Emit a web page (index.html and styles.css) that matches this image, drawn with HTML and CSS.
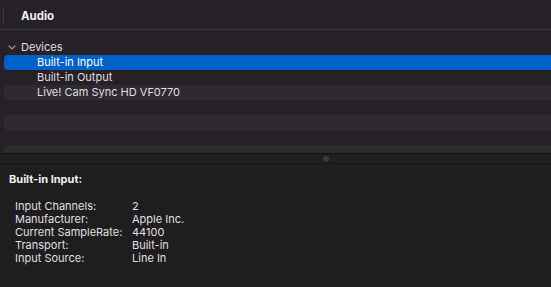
FILE: index.html
```html
<!DOCTYPE html>
<html lang="en">
<head>
    <meta charset="UTF-8">
    <meta name="viewport" content="width=device-width, initial-scale=1.0">
    <title>Audio</title>
    <link rel="stylesheet" href="styles.css">
</head>
<body>
    <div class="window">
        <div class="header">
            <div class="sep"></div>
            <div class="title">Audio</div>
        </div>
        <div class="tree">
            <div class="row group">
                <svg class="chevron" width="8" height="5" viewBox="0 0 8 5">
                    <polyline points="0.7,0.7 4,4 7.3,0.7" fill="none" stroke="#a9a5aa" stroke-width="1.1"/>
                </svg>
                <span>Devices</span>
            </div>
            <div class="row item selected"><span>Built-in Input</span></div>
            <div class="row item"><span>Built-in Output</span></div>
            <div class="row item alt"><span>Live! Cam Sync HD VF0770</span></div>
            <div class="row"></div>
            <div class="row alt"></div>
            <div class="row"></div>
            <div class="row alt"></div>
        </div>
        <div class="splitter"><div class="dot"></div></div>
        <div class="details">
            <div class="details-title">Built-in Input:</div>
            <div class="props">
                <div>Input Channels:</div><div>2</div>
                <div>Manufacturer:</div><div>Apple Inc.</div>
                <div>Current SampleRate:</div><div>44100</div>
                <div>Transport:</div><div>Built-in</div>
                <div>Input Source:</div><div>Line In</div>
            </div>
        </div>
    </div>
</body>
</html>
```
FILE: styles.css
```css
body {
    margin: 0;
    background-color: #1e1e1e;
    color: #e2dfe3;
    font-family: Inter, "Noto Sans", sans-serif;
    font-size: 11px;
}
.window {
    width: 551px;
    height: 287px;
    display: flex;
    flex-direction: column;
    overflow: hidden;
}
.header {
    height: 29px;
    background-color: #252126;
    border-bottom: 1px solid #3a363a;
    display: flex;
    align-items: center;
}
.sep {
    width: 1px;
    height: 16px;
    margin-left: 3px;
    background-color: #3e3a3e;
}
.title {
    margin-left: 17px;
    margin-top: 2px;
    font-weight: 700;
    font-size: 11.5px;
    color: #f2f0f2;
}
.tree {
    height: 123px;
    background-color: #252126;
    padding-top: 10px;
    overflow: hidden;
    box-sizing: border-box;
}
.row {
    height: 15px;
    line-height: 15px;
    margin-left: 4px;
    border-radius: 4px 0 0 4px;
    display: flex;
    align-items: center;
    flex-shrink: 0;
}
.row.alt {
    background-color: #2e2a2f;
}
.row.selected {
    background-color: #0061c9;
    color: #ffffff;
}
.group {
    padding-left: 4px;
}
.chevron {
    margin-right: 5px;
}
.item {
    padding-left: 33px;
}
.splitter {
    height: 9px;
    background-color: #202020;
    border-top: 1px solid #111;
    border-bottom: 1px solid #141414;
    display: flex;
    justify-content: center;
    align-items: center;
}
.dot {
    width: 6px;
    height: 6px;
    border-radius: 50%;
    background-color: #3a3a3a;
    margin-left: 101px;
}
.details {
    flex: 1;
    background-color: #1e1e1e;
    padding: 9px 0 0 9px;
}
.details-title {
    font-weight: 700;
    color: #f2f0f2;
    height: 13px;
    line-height: 13px;
}
.props {
    display: grid;
    grid-template-columns: 117px auto;
    line-height: 13px;
    margin: 14px 0 0 6px;
}
```
